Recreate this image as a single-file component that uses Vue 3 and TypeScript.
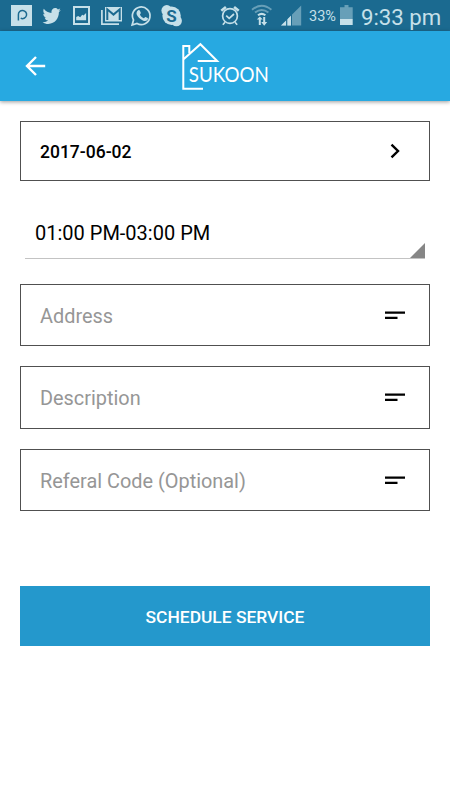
<script setup lang="ts">
import { ref } from 'vue'

interface Field {
  id: string
  label: string
}

const fields: Field[] = [
  { id: 'address', label: 'Address' },
  { id: 'description', label: 'Description' },
  { id: 'referral', label: 'Referal Code (Optional)' },
]
const date = ref('2017-06-02')
const slot = ref('01:00 PM-03:00 PM')
</script>

<template>
  <div class="screen">
    <div class="status">
      <div class="notifications">
        <svg width="31" height="31" viewBox="11 0 31 31">
          <path class="fill" d="M11 5h21v21H11z" />
          <path class="cut" stroke-width="1.5" d="M18.4 20.5v-5.7a4.1 4.1 0 1 1 2.3 3.4" />
        </svg>
        <svg width="31" height="31" viewBox="42 0 31 31">
          <path class="fill" transform="translate(41.2 4.4) scale(.87 .93)" d="M22.46 6c-.77.35-1.6.58-2.46.69.88-.53 1.56-1.37 1.88-2.38-.83.5-1.75.85-2.72 1.05C18.37 4.5 17.26 4 16 4c-2.35 0-4.27 1.92-4.27 4.29 0 .34.04.67.11.98C8.28 9.09 5.11 7.38 3 4.79c-.37.63-.58 1.37-.58 2.15 0 1.49.75 2.81 1.91 3.56-.71 0-1.37-.2-1.95-.5v.03c0 2.08 1.48 3.82 3.44 4.21a4.22 4.22 0 0 1-1.93.07 4.28 4.28 0 0 0 4 2.98 8.52 8.52 0 0 1-5.33 1.84c-.34 0-.68-.02-1.02-.06C3.44 20.29 5.7 21 8.12 21 16 21 20.33 14.46 20.33 8.79c0-.19 0-.37-.01-.56.84-.6 1.56-1.36 2.14-2.23z" />
        </svg>
        <svg width="28" height="31" viewBox="73 0 28 31">
          <path class="fill" fill-rule="evenodd" d="M73 6h17v19H73zM75 8v15h13V8z" />
          <path class="fill" d="M76.2 20.3v-3.2l2-1 2 1.1 2-2.4 1.3.7 2.6-2.6v7.4z" />
        </svg>
        <svg width="30" height="31" viewBox="101 0 30 31">
          <path class="fill" d="M105 7h17v14.5h-17z" />
          <path class="line" stroke-width="1.7" d="M101.9 10v14.2H119" />
          <path class="cut" stroke-width="2" d="M107.3 20V9.3l6.2 5.3 6.2-5.3V20" />
        </svg>
        <svg width="30" height="31" viewBox="131 0 30 31">
          <path class="line" stroke-width="1.7" d="M132.1 25l1.4-5A8.8 8.8 0 1 1 137 23.5z" />
          <path class="fill" d="M138.2 10.3c.7-.4 1.4-.2 1.7.4l.9 2c.2.6-.8 1.5-.9 1.9.8 1.8 2 3 3.8 3.7.5-.1 1.2-1.6 1.8-1.4l2.1 1c.6.3.3 1.5-.2 2.1-1.2 1.3-3 1.1-4.6.4-2.8-1.2-4.8-3-6-5.6-.7-1.7 0-3.7 1.4-4.5z" />
        </svg>
        <svg width="22" height="31" viewBox="161 0 22 31">
          <circle class="fill" cx="171.6" cy="15.8" r="9.2" />
          <circle class="fill" cx="166.8" cy="10.5" r="5.4" />
          <circle class="fill" cx="176.4" cy="20.8" r="5.5" />
          <text class="skype" x="171.6" y="21.7" text-anchor="middle">S</text>
        </svg>
      </div>
      <div class="system">
        <svg width="31" height="31" viewBox="220 0 31 31">
          <circle class="line" stroke-width="1.7" cx="230" cy="16" r="7.4" />
          <path class="line" stroke-width="1.7" d="M226.2 15.7l3 2.7 4.8-4.4M225 22.2l-2.2 2.5M235 22.2l2.2 2.5" />
          <path class="line" stroke-width="2.6" d="M221.3 10.7l4.6-3.7M238.7 10.7L234.1 7" />
        </svg>
        <svg width="30" height="31" viewBox="251 0 30 31">
          <path class="line dim" stroke-width="1.9" d="M252 9.8q9.7-8 19.4 0M255 12.6q6.7-5.4 13.4 0" />
          <path class="line" stroke-width="2" d="M258 15.3q3.7-2.9 7.4 0" />
          <path class="fill" d="M259.8 16.5l3 3.1h-2v5.4h-2v-5.4h-2zM263.2 17h2v5h2l-3 3.8-3-3.8h2z" />
        </svg>
        <svg width="28" height="31" viewBox="281 0 28 31">
          <path class="fill dim" d="M281 25.5L301.2 5.5v20z" />
          <path class="fill" d="M281 25.5l5.4-5.3v5.3zM287.2 19.5l3.8-3.8v9.8h-3.8z" />
          <path class="divider" d="M286.7 17v9M291.5 13v13" />
        </svg>
        <span class="percent">33%</span>
        <svg width="21" height="31" viewBox="340 0 21 31">
          <path class="fill dim" d="M344.5 5h4v2.3h4.2v12h-12.7v-12h4.5z" />
          <path class="fill" d="M340 19h12.7v6H340z" />
        </svg>
        <span class="clock">9:33 pm</span>
      </div>
    </div>

    <header class="toolbar">
      <svg class="back" width="22" height="22" viewBox="0 0 22 22">
        <path d="M20.2 11H2M11 2L2 11l9 9" />
      </svg>
      <svg class="logo" width="94" height="54" viewBox="0 0 94 54">
        <path d="M24 48.7H4.3V6h6v7M4.3 19.6L21.4 4.2 38.2 21H18.7" />
        <text x="9.8" y="42.4" textLength="80" lengthAdjust="spacingAndGlyphs">SUKOON</text>
      </svg>
    </header>

    <main class="form">
      <button class="box date" type="button">
        <span>{{ date }}</span>
        <svg width="10" height="16" viewBox="0 0 10 16">
          <path d="M1.5 1.7L8 8l-6.5 6.3" />
        </svg>
      </button>
      <div class="spinner">
        <span>{{ slot }}</span>
        <svg width="15" height="15" viewBox="0 0 15 15">
          <path d="M15 0v15H0z" />
        </svg>
      </div>
      <div class="fields">
        <div v-for="field in fields" :key="field.id" class="box field">
          <span>{{ field.label }}</span>
          <svg width="20" height="9" viewBox="0 0 20 9">
            <path d="M0 .5h20v2.3H0zM0 5.7h12.5V8H0z" />
          </svg>
        </div>
      </div>
      <button class="submit" type="button">SCHEDULE SERVICE</button>
    </main>
  </div>
</template>

<style>
body {
  margin: 0;
  background: #fff;
}
</style>

<style scoped>
.screen {
  width: 450px;
  height: 800px;
  overflow: hidden;
  background: #fff;
  font-family: Roboto, sans-serif;
}
.screen svg {
  display: block;
  flex: none;
  overflow: visible;
}
.status {
  display: flex;
  justify-content: space-between;
  box-sizing: border-box;
  height: 31px;
  padding: 0 9px 0 11px;
  background: #1b6a90;
  color: #c6e0e9;
}
.notifications,
.system {
  display: flex;
}
.fill {
  fill: #c6e0e9;
}
.line {
  fill: none;
  stroke: #c6e0e9;
}
.cut {
  fill: none;
  stroke: #1b6a90;
}
.dim {
  opacity: 0.45;
}
.divider {
  fill: none;
  stroke: #1b6a90;
  stroke-width: 1;
}
.skype {
  fill: #1b6a90;
  font: 700 17px Roboto, sans-serif;
}
.percent {
  width: 31px;
  font-size: 14.5px;
  line-height: 34px;
  white-space: nowrap;
}
.clock {
  width: 80px;
  font-size: 22.2px;
  line-height: 34px;
  white-space: nowrap;
}
.toolbar {
  display: flex;
  align-items: flex-start;
  box-sizing: border-box;
  height: 70px;
  padding: 0 24px 0 25px;
  background: #27a9e1;
  box-shadow: 0 1px 4px rgba(0, 0, 0, 0.4);
}
.back {
  margin-top: 24px;
}
.back path {
  fill: none;
  stroke: #fff;
  stroke-width: 2.4;
}
.logo {
  margin: 9px 0 0 132px;
}
.logo path {
  fill: none;
  stroke: #fff;
  stroke-width: 2;
}
.logo text {
  fill: #fff;
  font: 400 21px Lato, sans-serif;
}
.form {
  display: flex;
  flex-direction: column;
  padding: 20px 20px 0;
}
.box {
  display: flex;
  align-items: center;
  justify-content: space-between;
  box-sizing: border-box;
  border: 1px solid #505050;
  background: #fff;
}
.date {
  height: 60px;
  padding: 0 29px 0 19px;
  color: #000;
  font: 500 17.5px Roboto, sans-serif;
}
.date span {
  padding-top: 2px;
}
.date path {
  fill: none;
  stroke: #000;
  stroke-width: 2.4;
}
.spinner {
  display: flex;
  align-items: flex-end;
  justify-content: space-between;
  box-sizing: border-box;
  height: 53px;
  margin: 25px 5px 25px;
  padding-left: 10px;
  border-bottom: 1px solid #c3c3c3;
  color: #000;
  font-size: 20px;
}
.spinner span {
  line-height: 50px;
}
.spinner path {
  fill: #868686;
}
.fields {
  display: flex;
  flex-direction: column;
  gap: 20.3px;
}
.field {
  height: 62.2px;
  padding: 0 24px 0 19px;
  color: #969696;
  font-size: 19.9px;
}
.field span {
  padding-top: 2px;
}
.field path {
  fill: #000;
}
.submit {
  height: 60px;
  margin-top: 75px;
  padding: 1px 0 0;
  border: 0;
  background: #2498cc;
  color: #fff;
  font: 500 17.4px Roboto, sans-serif;
}
</style>
